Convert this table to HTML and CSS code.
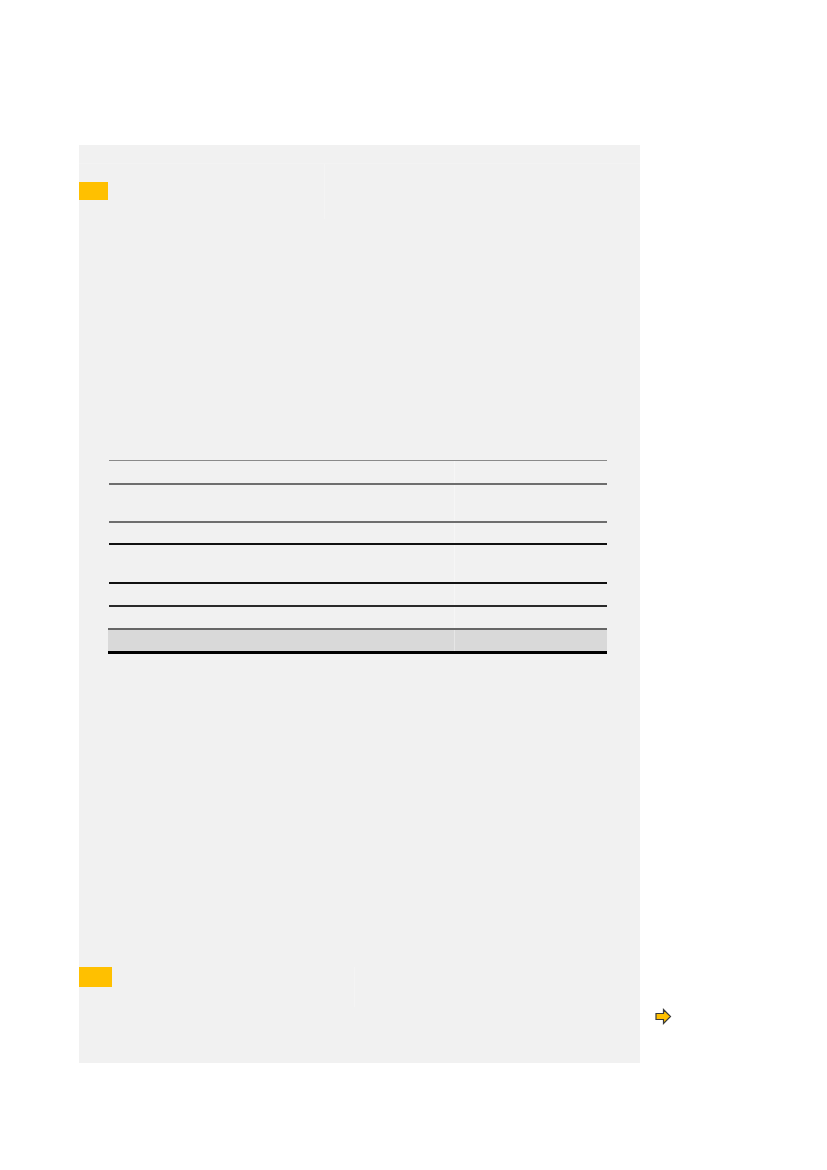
FILE: index.html
```html
<!DOCTYPE html>
<html lang="en">
<head>
<meta charset="utf-8">
<title>Page</title>
<link rel="stylesheet" href="styles.css">
</head>
<body>
<div class="page">
  <section class="panel">
    <div class="top-guides">
      <span class="tab tab-top"></span>
      <span class="guide guide-a"></span>
    </div>
    <div class="table">
      <div class="row r1"><div class="cell"></div><div class="cell"></div></div>
      <div class="row r2"><div class="cell"></div><div class="cell"></div></div>
      <div class="row r3"><div class="cell"></div><div class="cell"></div></div>
      <div class="row r4"><div class="cell"></div><div class="cell"></div></div>
      <div class="row r5"><div class="cell"></div><div class="cell"></div></div>
      <div class="row r6"><div class="cell"></div><div class="cell"></div></div>
      <div class="row r7 total"><div class="cell"></div><div class="cell"></div></div>
    </div>
    <div class="bottom-guides">
      <span class="tab tab-bottom"></span>
      <span class="guide guide-b"></span>
    </div>
  </section>
  <aside class="side">
    <svg class="arrow" width="17" height="17" viewBox="0 0 17 17" aria-hidden="true">
      <path d="M1 5.5 H8.5 V1.5 L15.5 8.5 L8.5 15.5 V11.5 H1 Z" fill="#ffc000" stroke="#3a3a3a" stroke-width="1.2" stroke-linejoin="miter"/>
    </svg>
  </aside>
</div>
</body>
</html>
```

FILE: styles.css
```css
html, body {
  margin: 0;
  padding: 0;
  background: #ffffff;
  font-family: "Liberation Sans", Arial, sans-serif;
}

.page {
  display: flex;
  align-items: flex-start;
  padding: 145px 0 0 79px;
}

.panel {
  width: 561px;
  height: 918px;
  background: #f1f1f1;
  display: flex;
  flex-direction: column;
  box-sizing: border-box;
}

.top-guides {
  display: flex;
  align-items: flex-start;
  margin-top: 18px;
  padding-top: 18px;
  height: 37px;
  border-top: 1px solid #f3f3f3;
}

.tab {
  display: block;
  background: #ffc000;
}

.tab-top {
  width: 29px;
  height: 18px;
}

.tab-bottom {
  width: 33px;
  height: 20px;
}

.guide {
  display: block;
  border-left: 1px solid #f4f4f4;
}

.guide-a {
  margin-left: 216px;
  margin-top: -18px;
  height: 55px;
}

.table {
  margin: 241px 0 0 30px;
  width: 498px;
  display: flex;
  flex-direction: column;
}

.row {
  display: grid;
  grid-template-columns: 345px 153px;
  box-sizing: border-box;
}

.cell + .cell {
  border-left: 1px solid rgba(255, 255, 255, 0.35);
}

.r1 { height: 23px; border-top: 1px solid #8a8a8a; }
.r2 { height: 38px; border-top: 2px solid #6e6e6e; }
.r3 { height: 22px; border-top: 2px solid #6e6e6e; }
.r4 { height: 39px; border-top: 2px solid #111111; }
.r5 { height: 23px; border-top: 2px solid #111111; }
.r6 { height: 23px; border-top: 2px solid #2a2a2a; }

.total {
  height: 26px;
  border-top: 2px solid #666666;
  border-bottom: 3px solid #000000;
  background: #d9d9d9;
  margin-left: -1px;
  padding-left: 1px;
}

.bottom-guides {
  display: flex;
  align-items: flex-start;
  margin-top: 313px;
  height: 40px;
}

.guide-b {
  margin-left: 242px;
  height: 40px;
}

.side {
  padding: 863px 0 0 15px;
}

.arrow {
  display: block;
}
```
